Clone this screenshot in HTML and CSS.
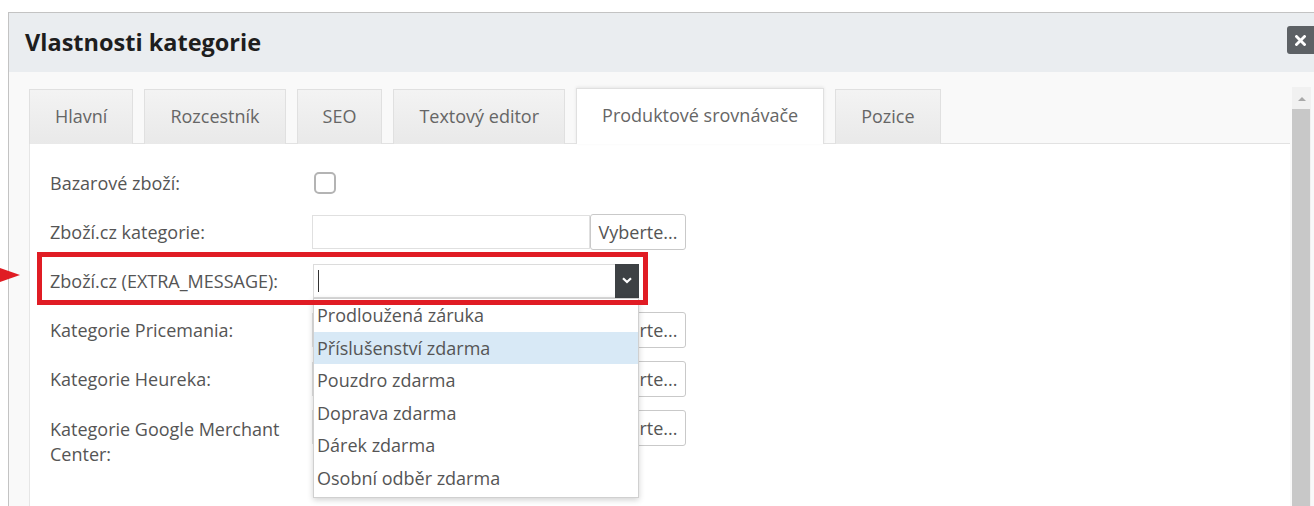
FILE: index.html
```html
<!DOCTYPE html>
<html lang="cs">
<head>
<meta charset="utf-8">
<title>Vlastnosti kategorie</title>
<link rel="stylesheet" href="styles.css">
</head>
<body>
<div class="dialog">
  <div class="dialog-head">
    <h1 class="dialog-title">Vlastnosti kategorie</h1>
    <button class="close-btn" type="button" aria-label="Zavřít">
      <svg width="11" height="11" viewBox="0 0 11 11"><path d="M1.5 1.5 L9.5 9.5 M9.5 1.5 L1.5 9.5" stroke="#fff" stroke-width="2.8" stroke-linecap="square"/></svg>
    </button>
  </div>
  <div class="dialog-body">
    <div class="main">
      <ul class="tabs">
        <li class="tab">Hlavní</li>
        <li class="tab">Rozcestník</li>
        <li class="tab">SEO</li>
        <li class="tab">Textový editor</li>
        <li class="tab active">Produktové srovnávače</li>
        <li class="tab">Pozice</li>
      </ul>
      <div class="panel">
        <div class="form">
          <div class="row">
            <label class="label">Bazarové zboží:</label>
            <span class="checkbox"></span>
          </div>
          <div class="row">
            <label class="label">Zboží.cz kategorie:</label>
            <span class="text-input"></span>
            <button class="pick-btn" type="button">Vyberte...</button>
          </div>
          <div class="row">
            <label class="label">Zboží.cz (EXTRA_MESSAGE):</label>
            <div class="combo">
              <span class="caret"></span>
              <span class="combo-toggle">
                <svg width="10" height="7" viewBox="0 0 10 7"><path d="M1 1.2 L5 5 L9 1.2" fill="none" stroke="#fff" stroke-width="2.2"/></svg>
              </span>
              <ul class="combo-list">
                <li class="option">Prodloužená záruka</li>
                <li class="option hover">Příslušenství zdarma</li>
                <li class="option">Pouzdro zdarma</li>
                <li class="option">Doprava zdarma</li>
                <li class="option">Dárek zdarma</li>
                <li class="option">Osobní odběr zdarma</li>
              </ul>
            </div>
            <div class="highlight">
              <span class="pointer"></span>
            </div>
          </div>
          <div class="row">
            <label class="label">Kategorie Pricemania:</label>
            <span class="text-input"></span>
            <button class="pick-btn" type="button">Vyberte...</button>
          </div>
          <div class="row">
            <label class="label">Kategorie Heureka:</label>
            <span class="text-input"></span>
            <button class="pick-btn" type="button">Vyberte...</button>
          </div>
          <div class="row row-top">
            <label class="label label-wrap">Kategorie Google Merchant Center:</label>
            <span class="text-input"></span>
            <button class="pick-btn" type="button">Vyberte...</button>
          </div>
        </div>
      </div>
    </div>
    <div class="scrollbar">
      <span class="scroll-up"></span>
      <span class="scroll-thumb"></span>
    </div>
  </div>
</div>
</body>
</html>
```
FILE: styles.css
```css
* { box-sizing: border-box; }

html, body {
  margin: 0;
  height: 506px;
  overflow: hidden;
  background: #fff;
  font-family: "Open Sans", "Liberation Sans", sans-serif;
}

.dialog {
  margin: 12px 0 0 8px;
  width: 1306px;
  height: 494px;
  border-top: 1px solid #c3c3c3;
  border-left: 1px solid #c3c3c3;
  display: flex;
  flex-direction: column;
}

/* header */
.dialog-head {
  height: 59px;
  background: #eaedf0;
  display: flex;
  align-items: flex-start;
  justify-content: space-between;
  padding-left: 16px;
  flex: none;
}

.dialog-title {
  margin: 0;
  font-size: 23.5px;
  font-weight: 700;
  color: #1e1e1e;
  line-height: 30px;
  padding-top: 14px;
}

.close-btn {
  margin-top: 13px;
  width: 27px;
  height: 28px;
  border: 0;
  border-radius: 3px 0 0 3px;
  background: #5d6165;
  padding: 0;
  display: flex;
  align-items: center;
  justify-content: center;
}

/* body */
.dialog-body {
  flex: 1;
  min-height: 0;
  background: #f9f9f9;
  display: flex;
  padding-top: 15px;
}

.main {
  margin-left: 20px;
  width: 1261px;
  display: flex;
  flex-direction: column;
  padding-top: 2px;
}

.tabs {
  list-style: none;
  margin: 0;
  padding: 0;
  display: flex;
  gap: 11px;
  position: relative;
  z-index: 1;
}

.tab {
  height: 55px;
  padding: 0 25px 3px;
  display: flex;
  align-items: center;
  font-size: 18px;
  color: #666;
  background: linear-gradient(#f3f3f3, #e9e9e9);
  border: 1px solid #e0e0e0;
  border-bottom: 0;
  margin-bottom: -1px;
}

.tab.active {
  background: #fff;
  height: 56px;
  margin-top: -1px;
  box-shadow: 0 -1px 3px rgba(0, 0, 0, 0.08);
}

.panel {
  flex: 1;
  background: #fff;
  border-top: 1px solid #e2e2e2;
  border-left: 1px solid #e6e6e6;
  padding: 21px 0 0 20px;
}

/* form */
.form {
  display: flex;
  flex-direction: column;
  gap: 13px;
}

.row {
  position: relative;
  display: flex;
  align-items: center;
  height: 36px;
}

.row-top { align-items: flex-start; }

.label {
  width: 262px;
  flex: none;
  font-size: 18px;
  line-height: 25px;
  color: #555;
}

.label-wrap {
  width: 250px;
  margin-right: 12px;
  padding-top: 7px;
}

.checkbox {
  margin-left: 2px;
  width: 22px;
  height: 22px;
  border: 2px solid #b4b4b4;
  border-radius: 5px;
  background: #fff;
}

.text-input {
  width: 278px;
  height: 34px;
  border: 1px solid #e0e0e0;
  background: #fff;
}

.pick-btn {
  width: 96px;
  height: 36px;
  border: 1px solid #c9c9c9;
  border-radius: 3px;
  background: #fff;
  font-family: "Open Sans", "Liberation Sans", sans-serif;
  font-size: 18px;
  color: #555;
  padding: 0;
}

/* combobox with its open list */
.combo {
  position: relative;
  margin-left: 1px;
  width: 326px;
  height: 34px;
  border: 1px solid #dcdcdc;
  background: #fff;
  display: flex;
  align-items: center;
  justify-content: space-between;
}

.caret {
  margin-left: 4px;
  width: 1px;
  height: 22px;
  background: #333;
}

.combo-toggle {
  width: 24px;
  height: 34px;
  margin-right: -1px;
  margin-top: -1px;
  background: #3d4144;
  display: flex;
  align-items: center;
  justify-content: center;
}

.combo-list {
  position: absolute;
  left: -1px;
  top: 33px;
  width: 326px;
  list-style: none;
  margin: 0;
  padding: 0 0 2px;
  background: #fff;
  border: 1px solid #d0d0d0;
  box-shadow: 0 2px 6px rgba(0, 0, 0, 0.18);
  z-index: 3;
}

.option {
  height: 32.6px;
  line-height: 32px;
  padding-left: 3px;
  font-size: 18px;
  color: #555;
  white-space: nowrap;
}

.option.hover { background: #d8e9f6; }

/* annotation over the EXTRA_MESSAGE row */
.highlight {
  position: absolute;
  left: -13px;
  top: -11px;
  width: 611px;
  height: 53px;
  border: 5px solid #e01c24;
  z-index: 4;
  pointer-events: none;
}

.pointer {
  position: absolute;
  left: -42px;
  top: 11px;
  width: 0;
  height: 0;
  border-top: 7px solid transparent;
  border-bottom: 7px solid transparent;
  border-left: 20px solid #e01c24;
}

/* scrollbar */
.scrollbar {
  margin-left: 2px;
  width: 19px;
  background: #f1f1f1;
  display: flex;
  flex-direction: column;
  align-items: center;
}

.scroll-up {
  margin-top: 10px;
  width: 0;
  height: 0;
  border-left: 4px solid transparent;
  border-right: 4px solid transparent;
  border-bottom: 4px solid #a9a9a9;
}

.scroll-thumb {
  margin-top: 8px;
  align-self: stretch;
  margin-right: 1px;
  flex: 1;
  background: #c8c8c8;
}
```
